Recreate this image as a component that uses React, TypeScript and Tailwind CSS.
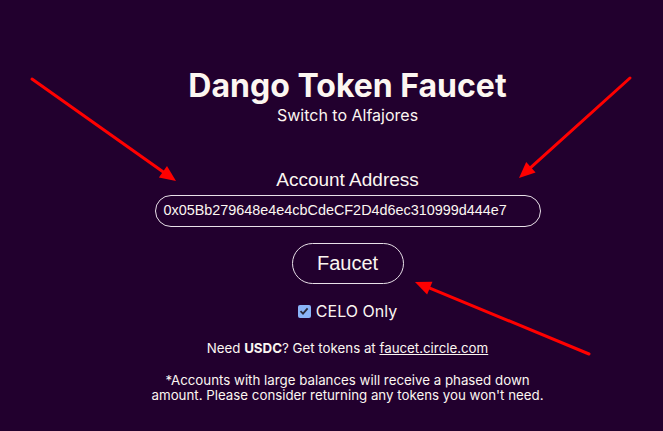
import React from "react";

const Arrow = ({ x1, y1, x2, y2 }: { x1: number; y1: number; x2: number; y2: number }) => {
    const a = Math.atan2(y2 - y1, x2 - x1);
    const len = 16;
    const w = 7;
    const bx = x2 - len * Math.cos(a);
    const by = y2 - len * Math.sin(a);
    const px = -Math.sin(a) * w;
    const py = Math.cos(a) * w;
    return (
        <g>
            <line x1={x1} y1={y1} x2={bx} y2={by} stroke="#ff0000" strokeWidth={3} strokeLinecap="round" />
            <polygon points={`${x2},${y2} ${bx + px},${by + py} ${bx - px},${by - py}`} fill="#ff0000" />
        </g>
    );
};

const App = () => {
    return (
        <div className="relative w-[663px] h-[431px] bg-[#22002e] text-[#fcf6f1] overflow-hidden font-['Inter',sans-serif]">
            <div className="flex flex-col items-center pt-[67px] pl-[32px]">
                <h1 className="text-[32px] font-bold leading-[38px]">Dango Token Faucet</h1>
                <p className="mt-[1px] text-[16px] leading-[19px]">Switch to Alfajores</p>

                <label className="mt-[43px] text-[19px] leading-[24px] font-['Liberation_Sans',sans-serif]">Account Address</label>
                <div className="mt-[3px] w-[386px] h-[32px] rounded-full border border-[#e8e0e8] flex items-center px-[8px] font-['Liberation_Sans',sans-serif] text-[14.4px]">
                    0x05Bb279648e4e4cbCdeCF2D4d6ec310999d444e7
                </div>
                <button className="mt-[16px] w-[112px] h-[41px] rounded-full border border-[#e8e0e8] font-['Liberation_Sans',sans-serif] text-[20px] leading-[20px] pb-[1px]">
                    Faucet
                </button>

                <label className="mt-[15px] flex items-center gap-[5px] text-[16px]">
                    <span className="w-[13px] h-[13px] rounded-[2px] bg-[#8ab4f8] flex items-center justify-center">
                        <svg width="10" height="10" viewBox="0 0 10 10">
                            <path d="M1.5 5.2 L4 7.6 L8.6 2.4" stroke="#2b2b3b" strokeWidth="1.8" fill="none" />
                        </svg>
                    </span>
                    CELO Only
                </label>

                <p className="mt-[16px] text-[13.3px]">
                    Need <b>USDC</b>? Get tokens at <a className="underline">faucet.circle.com</a>
                </p>

                <p className="mt-[14px] text-[13.3px] leading-[15px] text-center w-[400px]">
                    *Accounts with large balances will receive a phased down amount. Please consider returning any tokens you won't need.
                </p>
            </div>

            <svg className="absolute inset-0 pointer-events-none" width="663" height="431">
                <Arrow x1={32} y1={79} x2={176} y2={181} />
                <Arrow x1={630} y1={78} x2={519} y2={178} />
                <Arrow x1={589} y1={354} x2={415} y2={282} />
            </svg>
        </div>
    );
};

export default App;
